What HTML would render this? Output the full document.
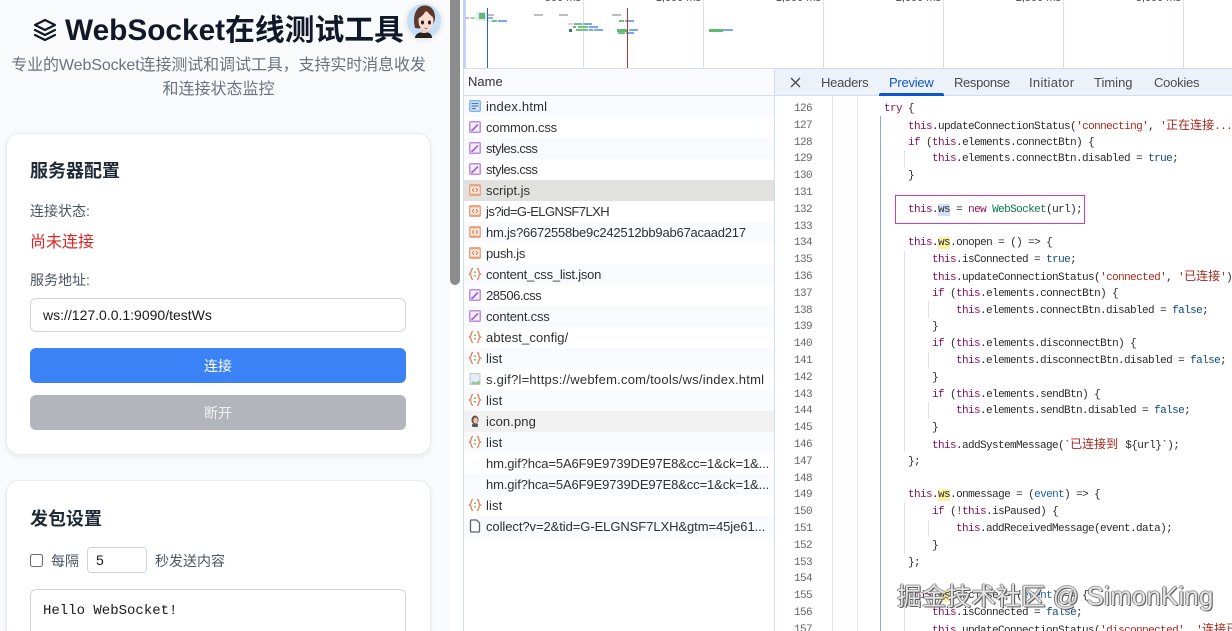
<!DOCTYPE html>
<html lang="zh"><head><meta charset="utf-8"><title>WebSocket</title>
<style>
*{box-sizing:border-box;margin:0;padding:0}
html,body{width:1232px;height:631px;overflow:hidden;background:#fff}
body{position:relative;font-family:"Liberation Sans","Noto Sans CJK SC",sans-serif;color:#333}
.a{position:absolute}
.t{position:absolute;white-space:nowrap}
#left{position:absolute;left:0;top:0;width:450px;height:631px;background:#f9fafc;overflow:hidden}
.card{position:absolute;left:5.500px;width:425px;background:#fff;border:1px solid #e9ebef;border-radius:13px;box-shadow:0 2px 5px rgba(0,0,0,.07)}
.b{position:absolute;height:1px}
.row{position:absolute;left:464px;width:310px;height:21px}
.row span{position:absolute;left:22px;top:0;font-size:13px;line-height:21px;color:#2f3033;white-space:nowrap;letter-spacing:.1px}
.row svg{position:absolute;left:4px;top:3px;width:14px;height:14px}
.tab{position:absolute;top:69px;font-size:13px;line-height:27px;color:#474a4f;white-space:nowrap}
#code,#nums{position:absolute;top:101px;height:530px;overflow:hidden;font:11px/16.8px "Liberation Mono","Noto Sans CJK SC",monospace;letter-spacing:-.6px}
#code{left:884px;width:348px;color:#2a2a2a}
#nums{left:794px;width:24px;color:#666}
#code div,#nums div{height:16.8px;white-space:pre}
.k{color:#8a1259}.s{color:#a8271c}.v{color:#0f4a78}.g{color:#0b7a4a}.e{color:#1a5f9e}
.y{background:#fbf1a1}.sel{background:#cfe0f5}
.c{font-size:12px;letter-spacing:0}
.gd{position:absolute;width:1px;background:#e0e4ea}
.bar{position:absolute;height:2px}
</style></head><body>
<div id="left">
<svg class="a" style="left:33px;top:18px" width="24" height="24" viewBox="0 0 24 24" fill="none" stroke="#111827" stroke-width="2.200" stroke-linejoin="round" stroke-linecap="round"><path d="M12 2 2 7l10 5 10-5z"/><path d="M2 12l10 5 10-5"/><path d="M2 17l10 5 10-5"/></svg>
<div class="t" style="left:65px;top:12px;font-size:29.800px;line-height:37px;font-weight:700;color:#111827">WebSocket在线测试工具</div>
<div class="t" style="left:0;width:437px;top:54px;text-align:center;font-size:16px;line-height:24px;letter-spacing:-.1px;color:#6b7280">专业的WebSocket连接测试和调试工具，支持实时消息收发</div>
<div class="t" style="left:0;width:437px;top:78px;text-align:center;font-size:16px;line-height:24px;color:#6b7280">和连接状态监控</div>
<svg class="a" style="left:407px;top:4px;filter:drop-shadow(0 1px 3px rgba(0,0,0,.12))" width="34" height="34" viewBox="0 0 34 34"><circle cx="17" cy="17" r="17" fill="#c4dff6"/><path d="M8 34c0-4 4-6 9-6s8 2 8 6z" fill="#26211f"/><rect x="14.500" y="23" width="5" height="6" fill="#f0c8b8"/><path d="M8 24C5 12 9 1.500 18 1.500c7 0 10 6 10 12 0 3-1 5-2 7l-14 4z" fill="#5a382b"/><ellipse cx="19" cy="17" rx="7.500" ry="9.500" fill="#f9dccf"/><path d="M12 14c2-1 6-4 7-9 1 3 4 6 7 8l1-4-5-5-7 0-4 5z" fill="#5a382b"/><ellipse cx="15.500" cy="18.500" rx="1.500" ry="2" fill="#2c1a14"/><ellipse cx="22.500" cy="18.500" rx="1.500" ry="2" fill="#2c1a14"/><path d="M17.500 24c1 .6 2 .6 3 0" stroke="#c4524a" stroke-width="1" fill="none"/></svg>

<div class="card" style="top:132.500px;height:322px"></div>
<div class="t" style="left:30px;top:159px;font-size:18px;line-height:25px;font-weight:700;color:#1f2937">服务器配置</div>
<div class="t" style="left:30px;top:201px;font-size:14px;line-height:20px;color:#4b5563">连接状态:</div>
<div class="t" style="left:30px;top:231px;font-size:16px;line-height:23px;color:#dc2626">尚未连接</div>
<div class="t" style="left:30px;top:270px;font-size:14px;line-height:20px;color:#4b5563">服务地址:</div>
<div class="a" style="left:30px;top:298px;width:376px;height:34px;background:#fff;border:1px solid #d1d5db;border-radius:6px"></div>
<div class="t" style="left:43px;top:306px;font-size:14px;line-height:18px;color:#1a1a1a">ws://127.0.0.1:9090/testWs</div>
<div class="a" style="left:30px;top:348px;width:376px;height:35px;background:#3b82f6;border-radius:6px;color:#fff;font-size:14px;line-height:37px;text-align:center">连接</div>
<div class="a" style="left:30px;top:395px;width:376px;height:35px;background:#b2b5bb;border-radius:6px;color:#f2f2f2;font-size:14px;line-height:37px;text-align:center">断开</div>

<div class="card" style="top:479.500px;height:151.500px;border-bottom:0;border-radius:13px 13px 0 0"></div>
<div class="t" style="left:30px;top:507px;font-size:18px;line-height:25px;font-weight:700;color:#1f2937">发包设置</div>
<div class="a" style="left:30px;top:554px;width:13px;height:13px;background:#fff;border:1px solid #6b6b6b;border-radius:2.500px"></div>
<div class="t" style="left:51px;top:551px;font-size:14px;line-height:20px;color:#4b5563">每隔</div>
<div class="a" style="left:87px;top:547px;width:60px;height:26px;background:#fff;border:1px solid #d1d5db;border-radius:4px"></div>
<div class="t" style="left:96px;top:552px;font-size:14px;line-height:17px;color:#1a1a1a">5</div>
<div class="t" style="left:155px;top:551px;font-size:14px;line-height:20px;color:#4b5563">秒发送内容</div>
<div class="a" style="left:30px;top:589px;width:376px;height:42px;background:#fff;border:1px solid #d1d5db;border-bottom:0;border-radius:6px 6px 0 0"></div>
<div class="t" style="left:43px;top:602px;font:14px/18px 'Liberation Mono',monospace;color:#1a1a1a">Hello WebSocket!</div>
</div>
<div class="a" style="left:450px;top:0;width:10px;height:285px;background:#8c8c8c;border-radius:0 0 5px 5px"></div>

<!-- timeline -->
<div class="a" style="left:463px;top:0;width:3px;height:68px;background:#c3d3f5"></div>
<div class="a" style="left:583px;top:0;width:1px;height:68px;background:#d8deef"></div>
<div class="a" style="left:703px;top:0;width:1px;height:68px;background:#d8deef"></div>
<div class="a" style="left:823px;top:0;width:1px;height:68px;background:#d8deef"></div>
<div class="a" style="left:943px;top:0;width:1px;height:68px;background:#d8deef"></div>
<div class="a" style="left:1063px;top:0;width:1px;height:68px;background:#d8deef"></div>
<div class="a" style="left:1183px;top:0;width:1px;height:68px;background:#d8deef"></div>
<div class="t" style="left:521px;width:60px;top:-9px;text-align:right;font-size:11px;line-height:14px;color:#444">500 ms</div>
<div class="t" style="left:641px;width:60px;top:-9px;text-align:right;font-size:11px;line-height:14px;color:#444">1,000 ms</div>
<div class="t" style="left:761px;width:60px;top:-9px;text-align:right;font-size:11px;line-height:14px;color:#444">1,500 ms</div>
<div class="t" style="left:881px;width:60px;top:-9px;text-align:right;font-size:11px;line-height:14px;color:#444">2,000 ms</div>
<div class="t" style="left:1001px;width:60px;top:-9px;text-align:right;font-size:11px;line-height:14px;color:#444">2,500 ms</div>
<div class="t" style="left:1121px;width:60px;top:-9px;text-align:right;font-size:11px;line-height:14px;color:#444">3,000 ms</div>

<div class="a" style="left:476px;top:12px;width:11px;height:9px;background:#e4e9f4"></div>
<div class="a" style="left:479px;top:13px;width:6px;height:6px;background:#5cba72"></div>
<div class="bar" style="left:487px;top:13.500px;width:7px;background:#bdbdbd"></div>
<div class="bar" style="left:534px;top:13.500px;width:9px;background:#bdbdbd"></div>
<div class="bar" style="left:559px;top:13.500px;width:9px;background:#bdbdbd"></div>
<div class="bar" style="left:612px;top:13.500px;width:9px;background:#bdbdbd"></div>
<div class="bar" style="left:465px;top:16.500px;width:4px;background:#d9b3e8"></div>
<div class="bar" style="left:470px;top:16.500px;width:5px;background:#9ed9a8"></div>
<div class="bar" style="left:487px;top:16.500px;width:6px;background:#8ab4f0"></div>
<div class="bar" style="left:487px;top:20px;width:5px;background:#dfe6f5"></div>
<div class="bar" style="left:492px;top:20px;width:5px;background:#6cc47e"></div>
<div class="bar" style="left:498px;top:20px;width:9px;background:#7aa7ee"></div>
<div class="bar" style="left:568px;top:23px;width:5px;background:#e0d3ef"></div>
<div class="bar" style="left:574px;top:23px;width:8px;background:#6cc47e"></div>
<div class="bar" style="left:583px;top:23px;width:9px;background:#7aa7ee"></div>
<div class="bar" style="left:573px;top:26px;width:3px;background:#999"></div>
<div class="bar" style="left:578px;top:26px;width:10px;background:#6cc47e"></div>
<div class="bar" style="left:589px;top:26px;width:9px;background:#7aa7ee"></div>
<div class="bar" style="left:569px;top:28.500px;width:3px;height:3px;background:#3a7288"></div>
<div class="bar" style="left:576px;top:29px;width:12px;background:#6cc47e"></div>
<div class="bar" style="left:589px;top:29px;width:4px;background:#7aa7ee"></div>
<div class="bar" style="left:594px;top:29px;width:9px;background:#7aa7ee"></div>
<div class="bar" style="left:619px;top:20px;width:5px;background:#6cc47e"></div>
<div class="bar" style="left:625px;top:20px;width:9px;background:#7aa7ee"></div>
<div class="bar" style="left:617px;top:28.500px;width:11px;height:3px;background:#5cba72"></div>
<div class="bar" style="left:629px;top:29px;width:9px;background:#7aa7ee"></div>
<div class="bar" style="left:618px;top:32px;width:7px;background:#6cc47e"></div>
<div class="bar" style="left:626px;top:32px;width:8px;background:#7aa7ee"></div>
<div class="bar" style="left:709px;top:28.500px;width:14px;height:3px;background:#5cba72"></div>
<div class="bar" style="left:723px;top:29px;width:10px;background:#7aa7ee"></div>
<div class="a" style="left:487px;top:8px;width:1px;height:60px;background:#2469b5"></div>
<div class="a" style="left:627px;top:8px;width:1px;height:60px;background:#a83a2f"></div>

<!-- list header -->
<div class="a" style="left:463px;top:68px;width:769px;height:1px;background:#d3dcf0"></div>
<div class="a" style="left:463px;top:69px;width:311px;height:26px;background:#f8fafd"></div>
<div class="a" style="left:775px;top:69px;width:457px;height:26px;background:#edf2f9"></div>
<div class="a" style="left:463px;top:95px;width:769px;height:1px;background:#d3dcf0"></div>
<div class="a" style="left:463px;top:69px;width:1px;height:562px;background:#d3dcf0"></div>
<div class="a" style="left:774px;top:69px;width:1px;height:562px;background:#d3dcf0"></div>
<div class="t" style="left:468px;top:69px;font-size:13px;line-height:26px;color:#333">Name</div>
<svg class="a" style="left:790px;top:77px" width="11" height="11" viewBox="0 0 11 11" stroke="#4a4d52" stroke-width="1.400"><path d="M1 1l9 9M10 1l-9 9"/></svg>
<div class="tab" style="left:821px;letter-spacing:-.25px">Headers</div>
<div class="tab" style="left:889px;color:#0b57d0;letter-spacing:-.25px">Preview</div>
<div class="tab" style="left:954px;letter-spacing:-.35px">Response</div>
<div class="tab" style="left:1029px;letter-spacing:.3px">Initiator</div>
<div class="tab" style="left:1094px">Timing</div>
<div class="tab" style="left:1154px;letter-spacing:-.25px">Cookies</div>
<div class="a" style="left:879px;top:93px;width:65px;height:3px;background:#0b57d0;border-radius:2px 2px 0 0"></div>

<!-- rows -->
<svg width="0" height="0" style="position:absolute"><defs>
<symbol id="doc" viewBox="0 0 14 14"><rect x="1" y="1" width="12" height="12" rx="2" fill="#8ab4e8"/><rect x="2.500" y="2.500" width="9" height="9" fill="#dbe9fa"/><path d="M3.500 4.500h7M3.500 7h7M3.500 9.500h4.500" stroke="#3c7fd0" stroke-width="1.200"/></symbol>
<symbol id="css" viewBox="0 0 14 14"><rect x="1" y="1" width="12" height="12" rx="2" fill="#bb8ce0"/><rect x="2.500" y="2.500" width="9" height="9" fill="#f6effb"/><path d="M4 10.500 10 4.500" stroke="#9a5fd0" stroke-width="1.600"/><path d="M3 11l2-.5-1.500-1.500z" fill="#9a5fd0"/></symbol>
<symbol id="js" viewBox="0 0 14 14"><rect x="1" y="1" width="12" height="12" rx="2" fill="#e8a584"/><rect x="2.500" y="3.500" width="9" height="7" fill="#fbeee6"/><path d="M6 5 4.500 7 6 9M8 5l1.500 2L8 9" stroke="#d4703c" stroke-width="1" fill="none"/></symbol>
<symbol id="json" viewBox="0 0 14 14"><path d="M5 1.500C2.500 1.500 4 6 1.500 7 4 8 2.500 12.500 5 12.500M9 1.500C11.500 1.500 10 6 12.500 7 10 8 11.500 12.500 9 12.500" stroke="#e0875a" stroke-width="1.400" fill="none"/><path d="M7 4.500v1.500M7 8v1.500" stroke="#7aa040" stroke-width="1.500"/></symbol>
<symbol id="img" viewBox="0 0 14 14"><rect x="2" y="1.500" width="10" height="11" fill="#e4ecf5" stroke="#b5bcc5" stroke-width=".8"/><path d="M2.500 12l3-3 2 1.500 4-2V12z" fill="#8fca8a"/></symbol>
<symbol id="ava" viewBox="0 0 14 14"><ellipse cx="7" cy="6" rx="3.500" ry="4.500" fill="#6a4a40"/><ellipse cx="7.500" cy="6.500" rx="2.200" ry="3" fill="#e9c6b8"/><rect x="4" y="10" width="6" height="3" rx="1" fill="#555"/></symbol>
<symbol id="file" viewBox="0 0 14 14"><path d="M2.500 2a1 1 0 0 1 1-1h5l3 3v8a1 1 0 0 1-1 1h-7a1 1 0 0 1-1-1z" fill="#fff" stroke="#5f6368" stroke-width="1.300"/></symbol>
</defs></svg>
<div class="row" style="top:96px;background:#f8fafd"><svg><use href="#doc"/></svg><span style="letter-spacing:.2px">index.html</span></div>
<div class="row" style="top:117px"><svg><use href="#css"/></svg><span style="letter-spacing:-.2px">common.css</span></div>
<div class="row" style="top:138px;background:#f8fafd"><svg><use href="#css"/></svg><span style="letter-spacing:-.5px">styles.css</span></div>
<div class="row" style="top:159px"><svg><use href="#css"/></svg><span style="letter-spacing:-.5px">styles.css</span></div>
<div class="row" style="top:180px;background:#e1e2df"><svg><use href="#js"/></svg><span style="letter-spacing:0">script.js</span></div>
<div class="row" style="top:201px"><svg><use href="#js"/></svg><span style="letter-spacing:-.57px">js?id=G-ELGNSF7LXH</span></div>
<div class="row" style="top:222px;background:#f8fafd"><svg><use href="#js"/></svg><span style="letter-spacing:-.22px">hm.js?6672558be9c242512bb9ab67acaad217</span></div>
<div class="row" style="top:243px"><svg><use href="#js"/></svg><span style="letter-spacing:-.3px">push.js</span></div>
<div class="row" style="top:264px;background:#f8fafd"><svg><use href="#json"/></svg><span style="letter-spacing:-.23px">content_css_list.json</span></div>
<div class="row" style="top:285px"><svg><use href="#css"/></svg><span style="letter-spacing:-.45px">28506.css</span></div>
<div class="row" style="top:306px;background:#f8fafd"><svg><use href="#css"/></svg><span style="letter-spacing:-.2px">content.css</span></div>
<div class="row" style="top:327px"><svg><use href="#json"/></svg><span>abtest_config/</span></div>
<div class="row" style="top:348px;background:#f8fafd"><svg><use href="#json"/></svg><span>list</span></div>
<div class="row" style="top:369px"><svg><use href="#img"/></svg><span style="letter-spacing:.23px">s.gif?l=https://webfem.com/tools/ws/index.html</span></div>
<div class="row" style="top:390px;background:#f8fafd"><svg><use href="#json"/></svg><span>list</span></div>
<div class="row" style="top:411px;background:#f1f1f1"><svg><use href="#ava"/></svg><span>icon.png</span></div>
<div class="row" style="top:432px;background:#f8fafd"><svg><use href="#json"/></svg><span>list</span></div>
<div class="row" style="top:453px"><span style="letter-spacing:-.12px">hm.gif?hca=5A6F9E9739DE97E8&amp;cc=1&amp;ck=1&amp;...</span></div>
<div class="row" style="top:474px;background:#f8fafd"><span style="letter-spacing:-.12px">hm.gif?hca=5A6F9E9739DE97E8&amp;cc=1&amp;ck=1&amp;...</span></div>
<div class="row" style="top:495px"><svg><use href="#json"/></svg><span>list</span></div>
<div class="row" style="top:516px;background:#f8fafd"><svg><use href="#file"/></svg><span style="letter-spacing:-.07px">collect?v=2&amp;tid=G-ELGNSF7LXH&amp;gtm=45je61...</span></div>

<!-- guides -->
<div class="gd" style="left:832px;top:96px;height:535px;background:#dfe5f2"></div>
<div class="gd" style="left:857px;top:96px;height:535px;background:#dfe5f2"></div>
<div class="gd" style="left:880px;top:116px;height:515px;background:#8ea9cf"></div>
<div class="gd" style="left:904px;top:150px;height:17px"></div>
<div class="gd" style="left:904px;top:251px;height:202px"></div>
<div class="gd" style="left:904px;top:503px;height:51px"></div>
<div class="gd" style="left:904px;top:604px;height:27px"></div>
<div class="gd" style="left:928px;top:301px;height:17px"></div>
<div class="gd" style="left:928px;top:352px;height:17px"></div>
<div class="gd" style="left:928px;top:402px;height:17px"></div>
<div class="gd" style="left:928px;top:520px;height:17px"></div>

<div id="nums"><div>126</div><div>127</div><div>128</div><div>129</div><div>130</div><div>131</div><div>132</div><div>133</div><div>134</div><div>135</div><div>136</div><div>137</div><div>138</div><div>139</div><div>140</div><div>141</div><div>142</div><div>143</div><div>144</div><div>145</div><div>146</div><div>147</div><div>148</div><div>149</div><div>150</div><div>151</div><div>152</div><div>153</div><div>154</div><div>155</div><div>156</div><div>157</div></div>
<div id="code"><div><span class="k">try</span> {</div>
<div>    <span class="k">this</span>.updateConnectionStatus(<span class="s">'connecting'</span>, <span class="s">'<span class="c">正在连接</span>...'</span>);</div>
<div>    <span class="k">if</span> (<span class="k">this</span>.elements.connectBtn) {</div>
<div>        <span class="k">this</span>.elements.connectBtn.disabled = <span class="v">true</span>;</div>
<div>    }</div>
<div></div>
<div>    <span class="k">this</span>.<span class="sel">ws</span> = <span class="k">new</span> <span class="g">WebSocket</span>(url);</div>
<div></div>
<div>    <span class="k">this</span>.<span class="y">ws</span>.onopen = () =&gt; {</div>
<div>        <span class="k">this</span>.isConnected = <span class="v">true</span>;</div>
<div>        <span class="k">this</span>.updateConnectionStatus(<span class="s">'connected'</span>, <span class="s">'<span class="c">已连接</span>'</span>);</div>
<div>        <span class="k">if</span> (<span class="k">this</span>.elements.connectBtn) {</div>
<div>            <span class="k">this</span>.elements.connectBtn.disabled = <span class="v">false</span>;</div>
<div>        }</div>
<div>        <span class="k">if</span> (<span class="k">this</span>.elements.disconnectBtn) {</div>
<div>            <span class="k">this</span>.elements.disconnectBtn.disabled = <span class="v">false</span>;</div>
<div>        }</div>
<div>        <span class="k">if</span> (<span class="k">this</span>.elements.sendBtn) {</div>
<div>            <span class="k">this</span>.elements.sendBtn.disabled = <span class="v">false</span>;</div>
<div>        }</div>
<div>        <span class="k">this</span>.addSystemMessage(`<span class="s c">已连接到 </span>${url}`);</div>
<div>    };</div>
<div></div>
<div>    <span class="k">this</span>.<span class="y">ws</span>.onmessage = (<span class="e">event</span>) =&gt; {</div>
<div>        <span class="k">if</span> (!<span class="k">this</span>.isPaused) {</div>
<div>            <span class="k">this</span>.addReceivedMessage(event.data);</div>
<div>        }</div>
<div>    };</div>
<div></div>
<div>    <span class="k">this</span>.<span class="y">ws</span>.onclose = (<span class="e">event</span>) =&gt; {</div>
<div>        <span class="k">this</span>.isConnected = <span class="v">false</span>;</div>
<div>        <span class="k">this</span>.updateConnectionStatus(<span class="s">'disconnected'</span>, <span class="s">'<span class="c">连接已断开</span>'</span>);</div></div>

<div class="a" style="left:895px;top:195px;width:190px;height:29px;border:1px solid #c93cc9"></div>

<div class="t" style="left:897px;top:581px;font-size:24.500px;line-height:32px;letter-spacing:.3px;color:#e4e4e4;text-shadow:1px 1px 0 #5e5e5e,-1px 0 0 #7e7e7e,0 -1px 0 #a0a0a0,1px 0 1px #666">掘金技术社区 <span style="font-size:25.700px">@ SimonKing</span></div>
</body></html>
